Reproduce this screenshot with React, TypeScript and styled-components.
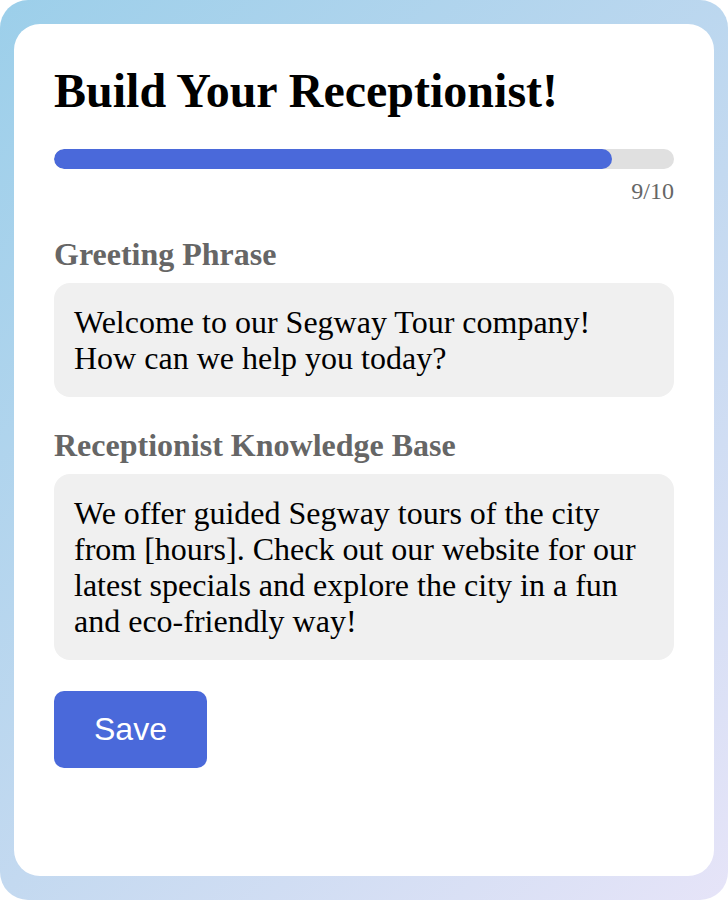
import React from 'react'
import styled, { createGlobalStyle } from 'styled-components'

const GlobalStyle = createGlobalStyle`
  html, body {
    margin: 0;
    padding: 0;
    background: #ffffff;
  }
  * {
    box-sizing: border-box;
  }
`

const STEP = 9
const TOTAL = 10

const fields = [
  {
    label: 'Greeting Phrase',
    text: 'Welcome to our Segway Tour company!\nHow can we help you today?',
  },
  {
    label: 'Receptionist Knowledge Base',
    text: 'We offer guided Segway tours of the city from [hours]. Check out our website for our latest specials and explore the city in a fun and eco-friendly way!',
  },
]

const App = () => {
  return (
    <>
      <GlobalStyle />
      <Page>
        <Card>
          <Title>Build Your Receptionist!</Title>

          <Track>
            <Fill style={{ width: `${(STEP / TOTAL) * 100}%` }} />
          </Track>
          <Counter>{STEP}/{TOTAL}</Counter>

          {fields.map((f) => (
            <Field key={f.label}>
              <Label>{f.label}</Label>
              <TextBox>{f.text}</TextBox>
            </Field>
          ))}

          <SaveButton type='button'>Save</SaveButton>
        </Card>
      </Page>
    </>
  )
}

const Page = styled('div')`
  height: 900px;
  padding: 24px 14px;
  border-radius: 28px;
  background: linear-gradient(135deg, #9ccfea 0%, #c3d9f0 55%, #e6e4f8 100%);
  display: flex;
  flex-direction: column;
`

const Card = styled('div')`
  flex: 1;
  background: #ffffff;
  border-radius: 26px;
  padding: 39px 40px;
  display: flex;
  flex-direction: column;
  align-items: stretch;
  font-family: 'Liberation Serif', 'Times New Roman', serif;
`

const Title = styled('h1')`
  margin: 0 0 31px;
  font-size: 48px;
  font-weight: 700;
  color: #000000;
  line-height: normal;
`

const Track = styled('div')`
  height: 19.5px;
  border-radius: 10px;
  background: #e0e0e0;
  overflow: hidden;
`

const Fill = styled('div')`
  height: 100%;
  border-radius: 10px;
  background: #4a69da;
`

const Counter = styled('div')`
  margin-top: 9.5px;
  text-align: right;
  font-size: 24px;
  color: #666666;
`

const Field = styled('div')`
  margin-top: 30.5px;
  display: flex;
  flex-direction: column;
  gap: 10px;
`

const Label = styled('label')`
  font-size: 32px;
  font-weight: 700;
  color: #666666;
`

const TextBox = styled('div')`
  background: #f0f0f0;
  border-radius: 16px;
  padding: 21px 20px;
  font-size: 32px;
  color: #000000;
  line-height: 36px;
  white-space: pre-line;
`

const SaveButton = styled('button')`
  align-self: flex-start;
  margin-top: 31px;
  padding: 20px 40px;
  border: none;
  border-radius: 10px;
  background: #4a69da;
  color: #ffffff;
  font-family: 'Liberation Sans', Arial, sans-serif;
  font-size: 32px;
  line-height: normal;
  cursor: pointer;
`

export default App
